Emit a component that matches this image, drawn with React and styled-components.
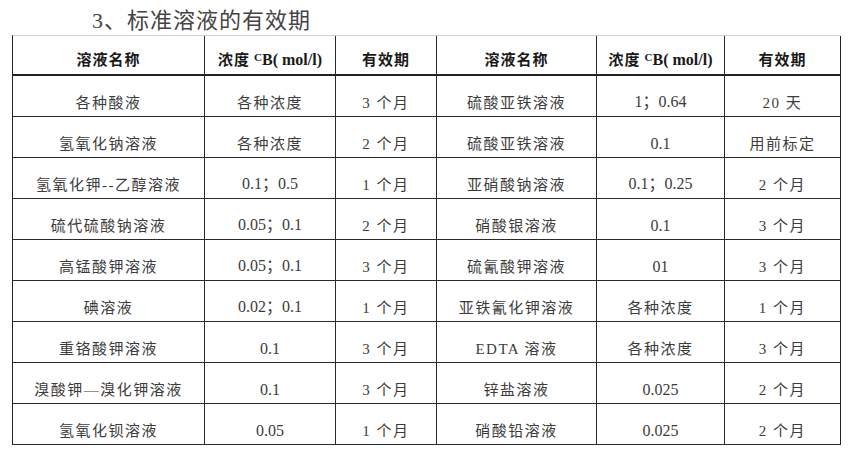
import React from "react"
import styled, { createGlobalStyle } from "styled-components"

const GlobalStyle = createGlobalStyle`
    html, body {
        margin: 0;
        padding: 0;
        background: #fff;
    }
    body {
        font-family: "Liberation Serif", "Noto Sans CJK SC", serif;
        color: #333;
    }
`

const Page = styled.div`
    width: 852px;
    height: 451px;
    padding: 6px 12px 0 12px;
    box-sizing: border-box;
`
const Title = styled.h1`
    margin: 0 0 0 80px;
    height: 29px;
    font-size: 22px;
    font-weight: normal;
    letter-spacing: 1px;
    color: #444;
    line-height: 29px;
`
const Table = styled.div`
    display: grid;
    grid-template-columns: 192px 131px 101px 160px 128px 116px;
    grid-template-rows: 40px repeat(9, 41px);
    width: 828px;
    border-top: 1px solid #cfcfcf;
    border-left: 1.5px solid #222;
    box-sizing: border-box;
`
const Cell = styled.div`
    display: flex;
    align-items: flex-end;
    justify-content: center;
    padding-bottom: ${p => p.$head ? "5px" : "4px"};
    box-sizing: border-box;
    border-right: ${p => p.$last ? "1.5px solid #222" : "1px solid #2a2a2a"};
    border-bottom: ${p => p.$head ? "2px solid #222" : "1px solid #2a2a2a"};
    font-size: ${p => p.$num ? "16px" : "15px"};
    font-weight: ${p => p.$head ? "bold" : "normal"};
    letter-spacing: ${p => p.$head ? "1px" : p.$num ? "0" : "1.5px"};
    color: ${p => p.$head ? "#1a1a1a" : "#3c3c3c"};
    white-space: pre;
`
const Sup = styled.span`
    font-size: 11px;
    font-weight: bold;
    position: relative;
    top: -6px;
    margin: 0 0 0 4px;
    letter-spacing: 0;
`
const Unit = styled.span`
    letter-spacing: 0;
    font-size: 16px;
`

const rows = [
    ["各种酸液", "各种浓度", "3 个月", "硫酸亚铁溶液", "1；0.64", "20 天"],
    ["氢氧化钠溶液", "各种浓度", "2 个月", "硫酸亚铁溶液", "0.1", "用前标定"],
    ["氢氧化钾--乙醇溶液", "0.1；0.5", "1 个月", "亚硝酸钠溶液", "0.1；0.25", "2 个月"],
    ["硫代硫酸钠溶液", "0.05；0.1", "2 个月", "硝酸银溶液", "0.1", "3 个月"],
    ["高锰酸钾溶液", "0.05；0.1", "3 个月", "硫氰酸钾溶液", "01", "3 个月"],
    ["碘溶液", "0.02；0.1", "1 个月", "亚铁氰化钾溶液", "各种浓度", "1 个月"],
    ["重铬酸钾溶液", "0.1", "3 个月", "EDTA 溶液", "各种浓度", "3 个月"],
    ["溴酸钾—溴化钾溶液", "0.1", "3 个月", "锌盐溶液", "0.025", "2 个月"],
    ["氢氧化钡溶液", "0.05", "1 个月", "硝酸铅溶液", "0.025", "2 个月"],
]

const Conc = () => (
    <>浓度<Sup>C</Sup><Unit>B( mol/l)</Unit></>
)

const isNum = s => /^[0-9.；]+$/.test(s)

export default function App() {
    const head = ["溶液名称", <Conc />, "有效期", "溶液名称", <Conc />, "有效期"]
    return (
        <>
            <GlobalStyle />
            <Page>
                <Title>3、标准溶液的有效期</Title>
                <Table>
                    {head.map((h, i) => (
                        <Cell key={"h" + i} $head $last={i === 5}>{h}</Cell>
                    ))}
                    {rows.map((r, ri) => r.map((c, ci) => (
                        <Cell key={ri + "-" + ci} $last={ci === 5} $num={isNum(c)}>{c}</Cell>
                    )))}
                </Table>
            </Page>
        </>
    )
}
